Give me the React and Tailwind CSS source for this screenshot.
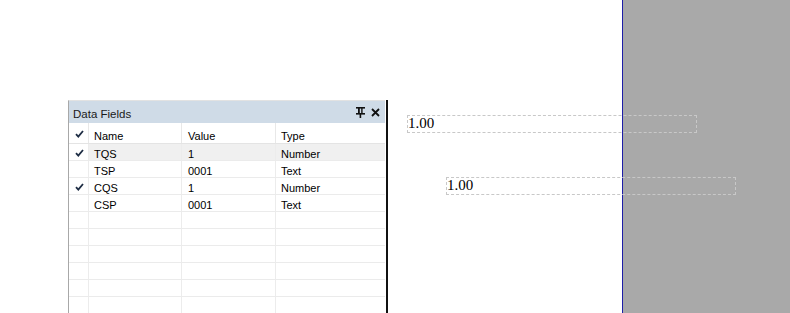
import React from "react";

const rows = [
  { check: true, name: "TQS", value: "1", type: "Number", hl: true },
  { check: false, name: "TSP", value: "0001", type: "Text" },
  { check: true, name: "CQS", value: "1", type: "Number" },
  { check: false, name: "CSP", value: "0001", type: "Text" },
  {}, {}, {}, {}, {}, {},
];

function Check() {
  return (
    <svg width="9" height="8" viewBox="0 0 9 8">
      <path d="M1 4.2 L3.3 6.6 L8 1" fill="none" stroke="#1e2d44" strokeWidth="1.8" />
    </svg>
  );
}

function Pin() {
  return (
    <svg width="9" height="11" viewBox="0 0 9 11">
      <rect x="0" y="0" width="9" height="1.6" fill="#111" />
      <rect x="2" y="1" width="1.8" height="6" fill="#111" />
      <rect x="5.2" y="1" width="1.4" height="6" fill="#111" />
      <rect x="0" y="6" width="9" height="1.6" fill="#111" />
      <rect x="3.6" y="7" width="1.6" height="4" fill="#111" />
    </svg>
  );
}

function Close() {
  return (
    <svg width="9" height="9" viewBox="0 0 9 9">
      <path d="M1 1 L8 8 M8 1 L1 8" stroke="#111" strokeWidth="1.8" />
    </svg>
  );
}

export default function App() {
  return (
    <div
      className="relative w-[790px] h-[313px] bg-white flex overflow-hidden text-black"
      style={{ fontFamily: '"Liberation Sans", Arial, sans-serif' }}
    >
      <div className="w-[622px] pt-[100px] pl-[68px]">
        <div className="w-[320px] h-[213px] flex">
          <div className="w-[317px] flex flex-col border-l border-l-[#a8a8a8] border-t border-t-[#e2e2e2]">
            <div className="h-[23px] bg-[#cfdbe7] flex items-center pl-[4px] pr-[5px] text-[11.5px] text-[#1a1a1a]">
              <span className="flex-1 pt-[5px]">Data Fields</span>
              <span className="mr-[6px] flex"><Pin /></span>
              <span className="flex"><Close /></span>
            </div>
            <div className="flex flex-col text-[11px] leading-none">
              <div className="h-[21px] flex items-center border-b border-b-[#e4e4e4]">
                <div className="w-[20px] h-full flex items-center justify-center pl-[1px] pt-[1px] border-r border-r-[#e8e8e8]"><Check /></div>
                <div className="w-[93px] h-full flex items-center pl-[5px] pt-[6px] border-r border-r-[#e8e8e8]">Name</div>
                <div className="w-[94px] h-full flex items-center pl-[6px] pt-[6px] border-r border-r-[#e8e8e8]">Value</div>
                <div className="flex-1 h-full flex items-center pl-[5px] pt-[6px]">Type</div>
              </div>
              {rows.map((r, i) => (
                <div key={i} className="h-[17px] flex items-center border-b border-b-[#ebebeb]">
                  <div className="w-[20px] h-full flex items-center justify-center pl-[1px] pt-[2px] border-r border-r-[#ececec]">
                    {r.check ? <Check /> : null}
                  </div>
                  <div className={`flex-1 h-full flex ${r.hl ? "bg-[#f0f0f0]" : ""}`}>
                    <div className="w-[93px] h-full flex items-center pl-[5px] pt-[4px] border-r border-r-[#ececec]">{r.name}</div>
                    <div className="w-[94px] h-full flex items-center pl-[6px] pt-[4px] border-r border-r-[#ececec]">{r.value}</div>
                    <div className="flex-1 h-full flex items-center pl-[5px] pt-[4px]">{r.type}</div>
                  </div>
                </div>
              ))}
            </div>
          </div>
          <div className="w-[1px] bg-white" />
          <div className="w-[2px] bg-[#111]" />
        </div>
      </div>
      <div className="w-[1px] bg-[#1e1ea8]" />
      <div className="flex-1 bg-[#a9a9a9]" />

      <div
        className="absolute left-[407px] top-[115px] w-[290px] h-[18px] border border-dashed border-[#c8c8c8] flex items-center text-[15px] leading-none"
        style={{ fontFamily: '"Liberation Serif", "Times New Roman", serif' }}
      >
        <span className="mt-[-1px]">1.00</span>
      </div>
      <div
        className="absolute left-[446px] top-[177px] w-[290px] h-[18px] border border-dashed border-[#c8c8c8] flex items-center text-[15px] leading-none"
        style={{ fontFamily: '"Liberation Serif", "Times New Roman", serif' }}
      >
        <span className="mt-[-1px]">1.00</span>
      </div>
    </div>
  );
}
